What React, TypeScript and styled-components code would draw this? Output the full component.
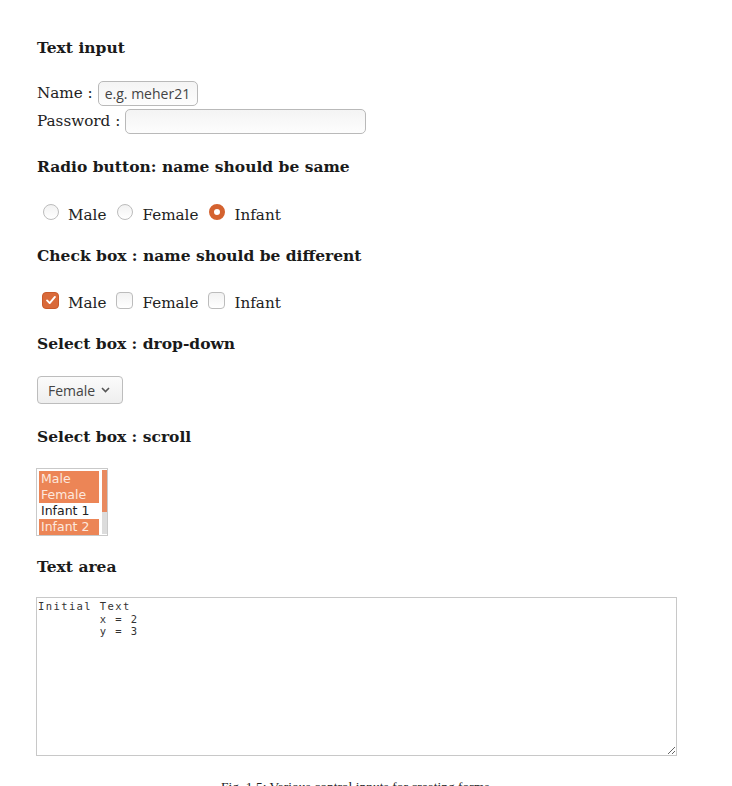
import React from "react";
import styled, { createGlobalStyle } from "styled-components";

const Global = createGlobalStyle`
  html, body { margin: 0; padding: 0; background: #fff; }
  body { font-family: "DejaVu Serif", serif; color: #222; overflow: hidden; height: 786px; }
`;

const Page = styled.div`
  width: 732px;
  box-sizing: border-box;
  padding: 38px 0 0 37px;
  display: flex;
  flex-direction: column;
  & > * { flex-shrink: 0; }
`;

const Heading = styled.h3<{ $gap?: number }>`
  margin: 0;
  font-family: "DejaVu Serif", serif;
  font-weight: bold;
  font-size: 15.5px;
  line-height: 20px;
  color: #1a1a1a;
  margin-bottom: ${(p) => p.$gap ?? 16}px;
`;

const Row = styled.div<{ $mb?: number }>`
  display: flex;
  align-items: center;
  height: 28px;
  font-size: 15.2px;
  color: #222;
  margin-bottom: ${(p) => p.$mb ?? 0}px;
`;

const Label = styled.span`
  margin-right: 5px;
  white-space: pre;
`;

const TextBox = styled.input<{ $w: number }>`
  box-sizing: border-box;
  width: ${(p) => p.$w}px;
  height: 25px;
  border: 1px solid #b9b9b9;
  border-radius: 5px;
  background: linear-gradient(#f4f4f4, #fdfdfd);
  padding: 0 6px;
  font-family: "Open Sans", "DejaVu Sans", sans-serif;
  font-size: 14px;
  color: #333;
  outline: none;
  &::placeholder { color: #444; }
`;

const ChoiceRow = styled.div<{ $mb?: number }>`
  display: flex;
  align-items: center;
  height: 28px;
  font-size: 15.2px;
  color: #222;
  margin: 0 0 ${(p) => p.$mb ?? 18}px 6px;
`;

const Choice = styled.label<{ $sp?: number }>`
  display: flex;
  align-items: center;
  margin-right: ${(p) => p.$sp ?? 10}px;
`;

const Radio = styled.input.attrs({ type: "radio" })`
  appearance: none;
  margin: -6px 9px 0 0;
  width: 16px;
  height: 16px;
  border-radius: 50%;
  border: 1px solid #bcbcbc;
  background: linear-gradient(#f2f2f2, #fff);
  box-sizing: border-box;
  &:checked {
    border: 5px solid #d4622f;
    background: #fff;
  }
`;

const Check = styled.input.attrs({ type: "checkbox" })`
  appearance: none;
  margin: -6px 9px 0 -1px;
  width: 17px;
  height: 17px;
  border-radius: 4px;
  border: 1px solid #bcbcbc;
  background: linear-gradient(#f2f2f2, #fff);
  box-sizing: border-box;
  &:checked {
    border-color: #c95a2b;
    background: #d96a3a url("data:image/svg+xml;utf8,<svg xmlns='http://www.w3.org/2000/svg' viewBox='0 0 16 16'><path d='M3.5 8.5l3 3 6-7' fill='none' stroke='white' stroke-width='2.2' stroke-linecap='round' stroke-linejoin='round'/></svg>") center/14px no-repeat;
  }
`;

const SelectButton = styled.div`
  box-sizing: border-box;
  width: 86px;
  height: 28px;
  border: 1px solid #bdbdbd;
  border-radius: 4px;
  background: linear-gradient(#fbfbfb, #eeeeee);
  display: flex;
  align-items: center;
  padding-left: 10px;
  gap: 6px;
  font-family: "Open Sans", "DejaVu Sans", sans-serif;
  font-size: 14px;
  color: #444;
  margin-bottom: 23px;
`;

const ListBox = styled.div`
  box-sizing: border-box;
  width: 72px;
  height: 68px;
  border: 1px solid #c9c9c9;
  display: flex;
  padding: 1px 0 1px 2px;
  background: #fff;
  margin: 0 0 21px -1px;
`;

const Options = styled.div`
  flex: 1;
  display: flex;
  flex-direction: column;
  padding-top: 1px;
`;

const Option = styled.div<{ $sel?: boolean }>`
  height: 16px;
  line-height: 16px;
  padding-left: 2px;
  font-family: "DejaVu Sans", sans-serif;
  font-size: 12.5px;
  white-space: nowrap;
  background: ${(p) => (p.$sel ? "#ec8556" : "#fff")};
  color: ${(p) => (p.$sel ? "#fde8de" : "#222")};
`;

const Track = styled.div`
  width: 5px;
  background: #dcdcdc;
  display: flex;
  flex-direction: column;
  margin-left: 3px;
`;

const Thumb = styled.div`
  height: 42px;
  background: #e98a60;
`;

const TextArea = styled.textarea`
  box-sizing: border-box;
  width: 641px;
  height: 159px;
  border: 1px solid #c8c8c8;
  padding: 2px 1px;
  font-family: "DejaVu Sans Mono", monospace;
  font-size: 10.5px;
  letter-spacing: 1.4px;
  line-height: 12.5px;
  color: #333;
  resize: both;
  outline: none;
  tab-size: 8;
  margin: 0 0 0 -1px;
`;

const CaptionWrap = styled.div`
  margin-top: 23px;
  padding-left: 184px;
`;

const Caption = styled.div`
  font-family: "Liberation Serif", serif;
  font-size: 13.5px;
  line-height: 16px;
  color: #222;
  white-space: nowrap;
`;

export default function App() {
  return (
    <>
      <Global />
      <Page>
        <Heading $gap={21}>Text input</Heading>
        <Row>
          <Label>Name :</Label>
          <TextBox $w={100} placeholder="e.g. meher21" />
        </Row>
        <Row $mb={22}>
          <Label>Password :</Label>
          <TextBox $w={241} type="password" />
        </Row>
        <Heading $gap={24}>Radio button: name should be same</Heading>
        <ChoiceRow $mb={17}>
          <Choice $sp={11}><Radio name="g" />Male</Choice>
          <Choice $sp={11}><Radio name="g" />Female</Choice>
          <Choice $sp={11}><Radio name="g" defaultChecked />Infant</Choice>
        </ChoiceRow>
        <Heading $gap={23}>Check box : name should be different</Heading>
        <ChoiceRow $mb={17}>
          <Choice $sp={11}><Check defaultChecked />Male</Choice>
          <Choice $sp={11}><Check />Female</Choice>
          <Choice $sp={11}><Check />Infant</Choice>
        </ChoiceRow>
        <Heading $gap={22}>Select box : drop-down</Heading>
        <SelectButton>
          Female
          <svg width="9" height="6" viewBox="0 0 9 6">
            <path d="M1 1l3.5 3.5L8 1" fill="none" stroke="#555" strokeWidth="1.6" />
          </svg>
        </SelectButton>
        <Heading $gap={21}>Select box : scroll</Heading>
        <ListBox>
          <Options>
            <Option $sel>Male</Option>
            <Option $sel>Female</Option>
            <Option>Infant 1</Option>
            <Option $sel>Infant 2</Option>
          </Options>
          <Track><Thumb /></Track>
        </ListBox>
        <Heading $gap={20}>Text area</Heading>
        <TextArea defaultValue={"Initial Text\n\tx = 2\n\ty = 3"} />
        <CaptionWrap>
          <Caption>Fig. 1.5: Various control inputs for creating forms</Caption>
        </CaptionWrap>
      </Page>
    </>
  );
}
